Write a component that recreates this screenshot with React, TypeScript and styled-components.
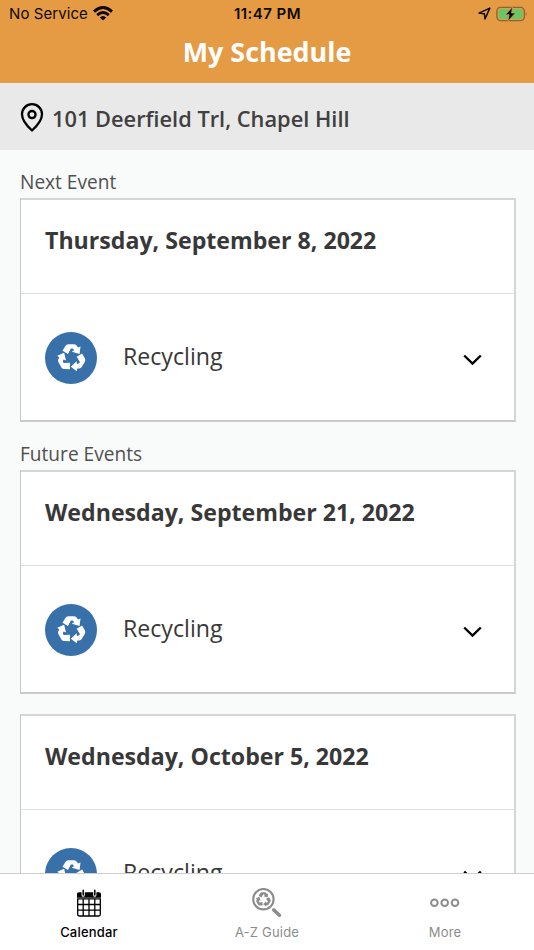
import React from "react";
import styled, { createGlobalStyle } from "styled-components";

const GlobalStyle = createGlobalStyle`
  * { box-sizing: border-box; }
  body { margin: 0; background: #f9fbfa; overflow: hidden; }
`;

const Screen = styled.div`
  display: flex;
  flex-direction: column;
  height: 950px;
  width: 534px;
  overflow: hidden;
  background: #f9fbfa;
  color: #383838;
  font-family: "Open Sans", sans-serif;
`;

const Header = styled.header`
  flex: none;
  height: 83px;
  background: #e59a44;
`;

const StatusBar = styled.div`
  display: grid;
  grid-template-columns: 1fr auto 1fr;
  align-items: center;
  height: 27px;
  padding: 0 6px 0 9px;
  color: #0d0904;
  font: 400 15px/27px Inter, sans-serif;
`;

const Carrier = styled.div`
  display: flex;
  align-items: center;
  gap: 5px;
  letter-spacing: 0.08px;
`;

const Clock = styled.div`
  margin-right: 2px;
  font-weight: 600;
  font-size: 15px;
  letter-spacing: 0.45px;
`;

const StatusIcons = styled.div`
  display: flex;
  align-items: center;
  justify-content: flex-end;
  gap: 5px;
`;

const Title = styled.h1`
  margin: 0;
  height: 50px;
  color: #fff;
  text-align: center;
  font-size: 26.9px;
  line-height: 50px;
  font-weight: 700;
`;

const AddressBar = styled.div`
  display: flex;
  flex: none;
  align-items: center;
  height: 67px;
  padding: 3px 20px 0;
  gap: 8px;
  background: #e9e9e9;
  color: #404040;
  font-size: 21.8px;
  font-weight: 600;
`;

const Content = styled.main`
  flex: 1;
  min-height: 0;
  overflow: hidden;
  padding: 0 18px 0 20px;
`;

const SectionLabel = styled.h2`
  margin: 0;
  height: 48px;
  padding-top: 16px;
  color: #505050;
  font-size: 19.1px;
  line-height: 33px;
  font-weight: 400;
`;

const Card = styled.article<{ $gap?: boolean }>`
  height: 224px;
  margin-top: ${(p) => (p.$gap ? "20px" : "0")};
  border: 2px solid #d5d6d6;
  border-left: 1px solid #c6c7c7;
  border-bottom-color: #c9caca;
  background: #fff;
`;

const CardDate = styled.h3`
  margin: 0;
  height: 94px;
  padding-left: 24px;
  border-bottom: 1px solid #e2e2e2;
  font-size: 23.15px;
  line-height: 81px;
  font-weight: 700;
`;

const EventRow = styled.div`
  display: flex;
  align-items: center;
  height: 126px;
  padding: 1px 31px 0 24px;
`;

const Badge = styled.div`
  display: grid;
  place-items: center;
  width: 52px;
  height: 52px;
  margin-right: 26px;
  border-radius: 50%;
  background: #3870aa;
  color: #fff;
`;

const EventName = styled.span`
  flex: 1;
  font-size: 23.15px;
  line-height: 32px;
  padding-bottom: 4px;
`;

const TabBar = styled.nav`
  display: grid;
  grid-template-columns: repeat(3, 1fr);
  flex: none;
  height: 77px;
  border-top: 1px solid #cfcfcf;
  background: #fff;
`;

const Tab = styled.div<{ $active?: boolean }>`
  display: flex;
  flex-direction: column;
  align-items: center;
  padding-top: 13px;
  color: ${(p) => (p.$active ? "#000" : "#8c8c8c")};
  font: ${(p) => (p.$active ? 500 : 400)} 13px/18px Inter, sans-serif;
  letter-spacing: 0.2px;
`;

const TabIcon = styled.div`
  display: grid;
  place-items: center;
  height: 32px;
  margin-bottom: 4px;
`;

const ChevronIcon = styled.svg`
  margin-top: 2px;
`;

const Wifi = () => (
  <svg width="20" height="15" viewBox="0 0 20 15" fill="none" stroke="currentColor" strokeWidth="2.9">
    <path d="M1 5.6Q10 -2.5 19 5.6" />
    <path d="M4.2 9.1Q10 3.9 15.8 9.1" />
    <path d="M6.8 11.4Q10 8.4 13.2 11.4L10 14.6Z" fill="currentColor" stroke="none" />
  </svg>
);

const LocationArrow = () => (
  <svg width="13" height="13" viewBox="0 0 13 13" fill="none" stroke="currentColor" strokeWidth="1.5" strokeLinejoin="round">
    <path d="M11.8 1.1L1 6.1L6.4 6.8L7 12Z" />
  </svg>
);

const Battery = () => (
  <svg width="32" height="16" viewBox="0 0 32 16">
    <rect x="0.9" y="1.4" width="27.4" height="13.2" rx="3.6" fill="none" stroke="#916232" strokeWidth="1.3" />
    <rect x="2.6" y="3" width="24" height="10" rx="2" fill="#65c766" />
    <path d="M29.9 5.7Q31.6 8 29.9 10.3Z" fill="#916232" />
    <path d="M16.6 0.8L9.4 8.8H13.2L11.8 15.2L19.4 7H15.5Z" fill="#0d0904" stroke="#e59a44" strokeWidth="0.7" />
  </svg>
);

const Pin = () => (
  <svg width="24" height="30" viewBox="0 0 24 30" fill="none" stroke="#000" strokeWidth="2.3">
    <path d="M12 27.5Q2 18.4 2 11.2A10 10 0 0 1 22 11.2Q22 18.4 12 27.5Z" strokeLinejoin="round" />
    <circle cx="12" cy="11.6" r="3.6" />
  </svg>
);

const Chevron = () => (
  <ChevronIcon width="20" height="14" viewBox="0 0 20 14" fill="none" stroke="#000" strokeWidth="2.4">
    <path d="M1.2 3.5L9.5 11.6L17.8 3.5" />
  </ChevronIcon>
);

const arrow =
  "M-28 -22L-19 -37Q-16 -42 -10 -42H8Q14 -42 17 -37L20 -32L28 -35L25 -12L1 -19L8 -24L4 -29H-2L-11 -12Z";

const Recycle = ({ size, x, y }: { size: number; x?: number; y?: number }) => (
  <svg x={x} y={y} width={size} height={size} viewBox="-45 -46 90 90" fill="currentColor" stroke="none">
    {[0, 120, 240].map((angle) => (
      <path key={angle} d={arrow} transform={`rotate(${angle})`} />
    ))}
  </svg>
);

const CalendarIcon = () => (
  <svg width="26" height="30" viewBox="0 0 26 30">
    <path d="M1 9.7V6Q1 4.2 3 4.2H23Q25 4.2 25 6V9.7Z" fill="#000" />
    <path d="M7.2 4V7.2M18.8 4V7.2" stroke="#fff" strokeWidth="3.2" strokeLinecap="round" />
    <path d="M7.2 2.2V7M18.8 2.2V7" stroke="#000" strokeWidth="1.5" strokeLinecap="round" />
    <path d="M1.7 10.9H24.3V26.3Q24.3 28 22.6 28H3.4Q1.7 28 1.7 26.3ZM7.2 10.9V28M13 10.9V28M18.8 10.9V28M1.7 16.5H24.3M1.7 22.2H24.3" fill="none" stroke="#000" strokeWidth="1.3" />
  </svg>
);

const GuideIcon = () => (
  <svg width="30" height="30" viewBox="0 0 30 30" fill="none" stroke="currentColor">
    <circle cx="11.4" cy="11.2" r="10.2" strokeWidth="2.1" />
    <path d="M21.8 22L27.4 27.3" strokeWidth="3.6" strokeLinecap="round" />
    <Recycle x={3.7} y={3.6} size={15.4} />
  </svg>
);

const MoreIcon = () => (
  <svg width="30" height="10" viewBox="0 0 30 10" fill="none" stroke="currentColor" strokeWidth="2">
    <circle cx="4.4" cy="4.7" r="3.3" />
    <circle cx="14.7" cy="4.7" r="3.3" />
    <circle cx="25" cy="4.7" r="3.3" />
  </svg>
);

const EventCard = ({ date, gap }: { date: string; gap?: boolean }) => (
  <Card $gap={gap}>
    <CardDate>{date}</CardDate>
    <EventRow>
      <Badge><Recycle size={29} /></Badge>
      <EventName>Recycling</EventName>
      <Chevron />
    </EventRow>
  </Card>
);

export default function App() {
  return (
    <Screen>
      <GlobalStyle />
      <Header>
        <StatusBar>
          <Carrier>No Service <Wifi /></Carrier>
          <Clock>11:47 PM</Clock>
          <StatusIcons><LocationArrow /><Battery /></StatusIcons>
        </StatusBar>
        <Title>My Schedule</Title>
      </Header>
      <AddressBar><Pin />101 Deerfield Trl, Chapel Hill</AddressBar>
      <Content>
        <SectionLabel>Next Event</SectionLabel>
        <EventCard date="Thursday, September 8, 2022" />
        <SectionLabel>Future Events</SectionLabel>
        <EventCard date="Wednesday, September 21, 2022" />
        <EventCard date="Wednesday, October 5, 2022" gap />
      </Content>
      <TabBar>
        <Tab $active><TabIcon><CalendarIcon /></TabIcon>Calendar</Tab>
        <Tab><TabIcon><GuideIcon /></TabIcon>A-Z Guide</Tab>
        <Tab><TabIcon><MoreIcon /></TabIcon>More</Tab>
      </TabBar>
    </Screen>
  );
}
